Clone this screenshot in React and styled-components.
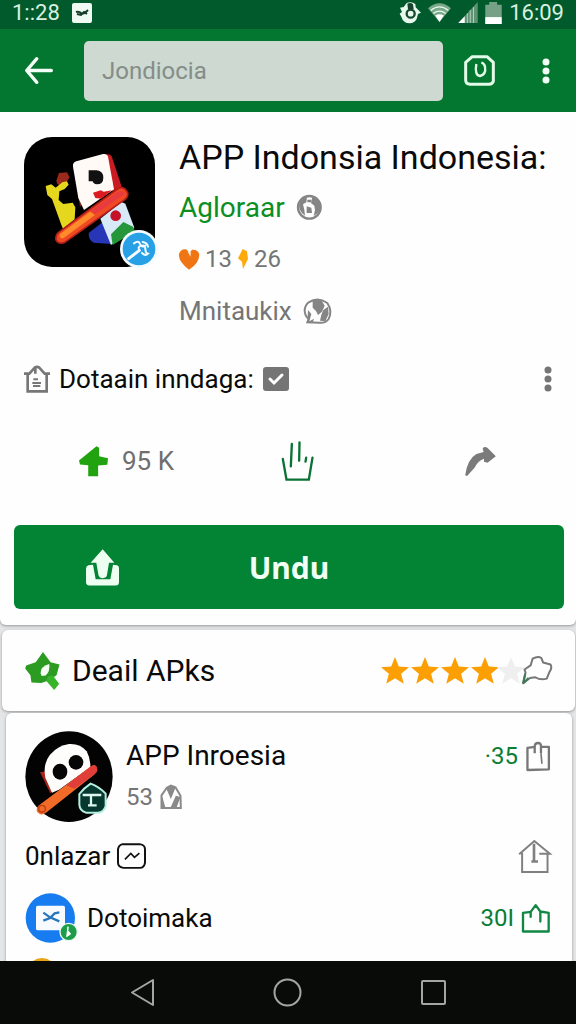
import React, { Component } from 'react';
import styled, { createGlobalStyle } from 'styled-components';

const GlobalStyles = createGlobalStyle`
  * {
    box-sizing: border-box;
  }

  body {
    margin: 0;
    padding: 0;
    font-family: Roboto, 'Noto Sans', sans-serif;
    color: #0a0a0a;
    background: #e4e5e7;
  }
`;

const Screen = styled.div`
  display: flex;
  flex-direction: column;
  height: 100vh;
  overflow: hidden;
`;

const StatusBar = styled.div`
  flex: none;
  display: flex;
  align-items: center;
  justify-content: space-between;
  height: 29px;
  padding: 0 12px 4px;
  background: #005a2b;
  color: #d9efe0;
  font-size: 22px;
  line-height: 24px;
`;

const StatusGroup = styled.div`
  display: flex;
  align-items: center;
  gap: ${props => props.$gap}px;
`;

const Toolbar = styled.header`
  flex: none;
  display: flex;
  align-items: center;
  height: 83px;
  padding: 0 26px 0 25px;
  background: #03762f;
`;

const SearchInput = styled.input`
  flex: 1;
  min-width: 0;
  height: 60px;
  margin: 0 21px 0 31px;
  padding: 0 18px;
  border: 0;
  border-radius: 5px;
  background: #cdd9d1;
  color: #858d88;
  font-family: inherit;
  font-size: 24px;
`;

const IconButton = styled.button`
  flex: none;
  display: flex;
  margin: 0;
  margin-left: ${props => props.$push || 0}px;
  padding: 0;
  border: 0;
  background: none;
`;

const Icon = styled.svg`
  flex: none;
  display: block;
  width: ${props => props.$w}px;
  height: ${props => props.$h}px;
  overflow: visible;
`;

const Content = styled.main`
  flex: 1;
  min-height: 0;
  overflow: hidden;
`;

const Card = styled.section`
  background: #fdfefd;
  border-radius: 6px;
  box-shadow: 0 1px 3px rgba(0, 0, 0, 0.35);
`;

const AppCard = styled(Card)`
  padding: 25px 12px 16px 14px;
  border-radius: 0 0 6px 6px;
`;

const AppHead = styled.div`
  display: flex;
  gap: 24px;
  padding-left: 10px;
`;

const AppTitle = styled.h1`
  margin: 0 0 4px;
  font-size: 34px;
  font-weight: 400;
  line-height: 40px;
  white-space: nowrap;
`;

const MetaRow = styled.div`
  display: flex;
  align-items: center;
  gap: ${props => props.$gap || 8}px;
  height: 52px;
  color: #757575;
  font-size: ${props => props.$size}px;
`;

const DevLink = styled.a`
  color: #0b8f22;
  text-decoration: none;
`;

const DomainRow = styled.div`
  display: flex;
  align-items: center;
  gap: 9px;
  height: 44px;
  margin-top: 20px;
  padding: 0 12px 0 10px;
  font-size: 26px;
`;

const CheckWrap = styled.span`
  position: relative;
  display: flex;
  margin-right: auto;
`;

const Check = styled.input`
  appearance: none;
  width: 26px;
  height: 24px;
  margin: 0;
  border-radius: 3px;
  background: #757575;
`;

const CheckMark = styled.svg`
  position: absolute;
  top: 0;
  left: 0;
  width: 26px;
  height: 24px;
  pointer-events: none;
`;

const Actions = styled.div`
  display: grid;
  grid-template-columns: 1.1fr 1fr auto;
  align-items: center;
  justify-items: start;
  height: 80px;
  margin-top: 20px;
  padding: 0 68px 0 65px;
`;

const VoteButton = styled(IconButton)`
  align-items: center;
  gap: 14px;
  color: #6f6f6f;
  font-family: inherit;
  font-size: 26px;
`;

const InstallButton = styled.button`
  display: grid;
  grid-template-columns: 1fr auto 1fr;
  align-items: center;
  width: 100%;
  height: 84px;
  margin-top: 24px;
  padding: 0 72px;
  border: 0;
  border-radius: 6px;
  background: #038435;
  color: #f1fff5;
  font-family: 'Noto Sans', sans-serif;
  font-size: 30px;
  font-weight: 700;
`;

const DetailCard = styled(Card)`
  display: flex;
  align-items: center;
  justify-content: space-between;
  height: 81px;
  margin: 5px 1px 0 2px;
  padding: 0 23px;
`;

const DetailTitle = styled.h2`
  display: flex;
  align-items: center;
  gap: 12px;
  margin: 0;
  font-size: 30px;
  font-weight: 400;
`;

const Rating = styled.div`
  display: flex;
  align-items: center;
`;

const ListCard = styled(Card)`
  margin: 2px 4px 0 6px;
  padding: 18px 22px 18px 19px;
`;

const ListRow = styled.div`
  display: flex;
  align-items: ${props => props.$align || 'center'};
  height: ${props => props.$height}px;
  margin-bottom: 15px;
`;

const RowText = styled.div`
  flex: 1;
  display: flex;
  align-items: center;
  gap: 7px;
  padding-left: ${props => props.$indent || 0}px;
  font-size: 26px;
`;

const AppEntry = styled.div`
  flex: 1;
  padding-left: 13px;
`;

const EntryName = styled.h3`
  margin: 4px 0 0;
  font-size: 28px;
  font-weight: 400;
  line-height: 42px;
`;

const EntrySub = styled.div`
  display: flex;
  align-items: center;
  gap: 7px;
  color: #757575;
  font-size: 24px;
  line-height: 40px;
`;

const Count = styled.div`
  display: flex;
  align-items: center;
  gap: 8px;
  height: 50px;
  color: #0b7d34;
  font-size: 24px;
`;

const NavBar = styled.nav`
  flex: none;
  display: grid;
  grid-template-columns: repeat(3, 1fr);
  align-items: center;
  justify-items: center;
  height: 63px;
  padding: 0 12%;
  background: #090b09;
`;

const Dots = ({ color }) => (
  <Icon $w={8} $h={26} viewBox="0 0 8 26" fill={color}>
    <circle cx="4" cy="4" r="3.500" />
    <circle cx="4" cy="13" r="3.500" />
    <circle cx="4" cy="22" r="3.500" />
  </Icon>
);

const Star = ({ faded }) => (
  <Icon $w={faded ? 22 : 30} $h={30} viewBox={faded ? '4 0 22 30' : '0 0 30 30'} fill={faded ? '#efefef' : '#fb9f04'}>
    <path d="M15 1l3.800 9.500 10.200.7-7.900 6.500 2.700 10L15 22.300 6.200 27.700l2.700-10L1 11.200l10.200-.7z" />
  </Icon>
);

const AppLogo = () => (
  <Icon $w={131} $h={130} viewBox="42 37 393 390">
    <rect x="42" y="37" width="393" height="390" rx="84" fill="#000" />
    <path d="M139 168l8-23 24-2 8 15-9 14 4 6-18 8-14-8z" fill="#9c2a1a" />
    <path d="M107 184l17-5 13 10 20-16 14-3 5 10-12 13-16 7-2 26 14 12 28-4 8 14-2 36-35 28-4-9-29-80-14-12z" fill="#e5d71d" />
    <path d="M203 205l11-9 8 40-12 10z" fill="#6d2418" />
    <path d="M285 89q18-3 21 9l29 88-28 14z" fill="#c91c22" />
    <path d="M189 126q-2-12 10-16l80-22q12-2 15 8l18 98-90 62-17-36z" fill="#fffaf6" />
    <path d="M236 137h24q20 3 20 22 0 20-20 20-10-1-12-9h-12z" fill="#111" />
    <path d="M249 204l23-7 9 4 24-4-31 25-18-2z" fill="#dc1b20" />
    <path d="M236 325l46-36 22 69-53-4q-16-8-15-29z" fill="#2636b6" />
    <path d="M271 282l63-50 12 5 27 72-70 52z" fill="#d8e9f7" />
    <path d="M303 329l37-37 29 14 6 14-67 41z" fill="#25973a" />
    <circle cx="317" cy="273" r="16" fill="#c3122a" />
    <path d="M145 324L318 196q23-17 35 9 2 11-9 20L167 351q-19 11-29-5-2-13 7-22z" fill="#ee4a23" stroke="#b81f1b" strokeWidth="5" />
    <path d="M150 328l90-67 15 10-94 69q-15 4-11-12z" fill="#ff8b2b" />
    <path d="M242 258l83-57q15-7 19 7l-88 60z" fill="#e93a3f" />
    <circle cx="387" cy="373" r="57" fill="#f3fbff" />
    <circle cx="387" cy="373" r="49" fill="#27a0e6" />
    <path d="M356 402l32-25" fill="none" stroke="#f4fbff" strokeWidth="9" strokeLinecap="round" />
    <path d="M372 356q14-10 18 2t16 5M388 377q-6-12 6-14t12 10 8 14q-8 8-18-2M398 352q14 2 16 14" fill="none" stroke="#f4fbff" strokeWidth="6" strokeLinecap="round" />
  </Icon>
);

const Avatar = () => (
  <Icon $w={88} $h={91} viewBox="74 63 262 273">
    <ellipse cx="205" cy="200" rx="131" ry="136" fill="#030303" />
    <path d="M118 187l17-3 26 55-12 11z" fill="#a7231d" />
    <path d="M134 203q-8-41 14-69 24-28 57-32 34-2 53 22 12 22 11 48l-94 67-21 9z" fill="#fffdfb" />
    <ellipse cx="178" cy="185" rx="22" ry="24" fill="#060606" />
    <circle cx="226" cy="157" r="22" fill="#060606" />
    <path d="M113 287l158-118q16-9 19 10 0 8-10 15L136 308q-17 13-28-5-2-9 5-16z" fill="#f26a28" />
    <path d="M196 226l75-57q16-9 19 10 0 8-10 15l-59 42z" fill="#e23e39" />
    <circle cx="124" cy="296" r="10" fill="none" stroke="#b93e12" strokeWidth="4" />
    <path d="M270 221q25 9 45 30v37q-6 20-24 20h-35q-19-6-20-24v-32q14-18 34-31z" fill="#06382f" stroke="#b4eee0" strokeWidth="6" />
    <path d="M246 255h56M271 256v30M262 286h26" fill="none" stroke="#dcf6ef" strokeWidth="7" />
  </Icon>
);

class App extends Component {
  state = {
    query: 'Jondiocia',
    verified: true
  };

  render() {
    const { query, verified } = this.state;
    return (
      <Screen>
        <GlobalStyles />
        <StatusBar>
          <StatusGroup $gap={12}>
            <span>1::28</span>
            <Icon $w={20} $h={20} viewBox="0 0 20 20">
              <rect width="20" height="20" rx="2" fill="#eefaf2" />
              <path d="M4 9q3-1 5 1t7-3M5 11l4 1 3-3 3 2" fill="none" stroke="#153d27" strokeWidth="2" />
            </Icon>
          </StatusGroup>
          <StatusGroup $gap={7}>
            <Icon $w={21} $h={22} viewBox="345 3 63 66">
              <path d="M365 6q14-6 26 3l1 10 16 16-9 4-4 15q-8 13-20 13-21-1-26-20l-5-9 7-5-6-13 11-2z" fill="#e7f8ec" />
              <path d="M367 8q10-5 17 2l2 13-8 6-9-5z" fill="#16442c" />
              <circle cx="377" cy="38" r="12" fill="none" stroke="#17472f" strokeWidth="7" />
            </Icon>
            <Icon $w={23} $h={19} viewBox="432 5 70 58">
              <path d="M432 21q35-31 70 0l-35 42z" fill="#79a98a" />
              <path d="M440 28q27-22 54 0M448 37q19-14 38 0" fill="none" stroke="#e7f8ec" strokeWidth="4" />
              <path d="M454 43q13-8 26 0l-13 20z" fill="#fff" />
            </Icon>
            <Icon $w={20} $h={21} viewBox="508 3 60 65">
              <path d="M568 3v65h-60z" fill="#5f9374" />
              <path d="M528 47v21h-20z" fill="#fff" />
              <path d="M536 38v30M545 28v40M555 19v49" stroke="#b5d3c0" strokeWidth="3" />
            </Icon>
            <Icon $w={17} $h={22} viewBox="594 0 50 67">
              <path d="M606 0h24v8h14v59h-50V8h12z" fill="#75a287" />
              <path d="M594 46h50v21h-50z" fill="#fff" />
            </Icon>
            <span>16:09</span>
          </StatusGroup>
        </StatusBar>

        <Toolbar>
          <IconButton aria-label="Back">
            <Icon $w={28} $h={27} viewBox="77 170 83 80" fill="none" stroke="#f4fff7" strokeWidth="10" strokeLinecap="round" strokeLinejoin="round">
              <path d="M155 210H83M112 175l-30 35 30 35" />
            </Icon>
          </IconButton>
          <SearchInput
            aria-label="Search"
            type="text"
            value={query}
            onChange={e => this.setState({ query: e.target.value })}
          />
          <IconButton aria-label="Account">
            <Icon $w={31} $h={31} viewBox="527 163 93 93" fill="none" stroke="#e4fbea" strokeWidth="9">
              <path d="M552 168h44l19 17v57q-3 9-13 9h-57q-13-1-13-13v-53z" strokeLinejoin="round" />
              <path d="M564 190q-6 34 11 36 19-4 15-28-2-10-11-12" strokeWidth="7" />
            </Icon>
          </IconButton>
          <IconButton aria-label="More" $push={47}>
            <Dots color="#f0fff4" />
          </IconButton>
        </Toolbar>

        <Content>
          <AppCard>
            <AppHead>
              <AppLogo />
              <div>
                <AppTitle>APP Indonsia Indonesia:</AppTitle>
                <MetaRow $size={28} $gap={12}>
                  <DevLink href="#developer">Agloraar</DevLink>
                  <Icon $w={25} $h={25} viewBox="398 192 75 75">
                    <circle cx="435" cy="229" r="34" fill="none" stroke="#858585" strokeWidth="7" />
                    <path d="M404 222q5-18 24-24l-2 16-10 6 4 16 2 18q-18-12-18-32zM444 198q20 6 24 28-2 22-20 28l4-16-2-14-10-8z" fill="#858585" />
                    <path d="M429 206h12v8h-12zM427 226l14 4 2 16h-16z" fill="#858585" />
                  </Icon>
                </MetaRow>
                <MetaRow $size={24} $gap={6}>
                  <Icon $w={20} $h={21} viewBox="40 352 60 63">
                    <path d="M70 414Q37 389 40 367q5-16 21-14l11 10 7-9q19-1 22 15-1 26-31 45z" fill="#f07514" />
                    <path d="M66 360l8 15 2-13z" fill="#fde7d2" />
                  </Icon>
                  <span>13</span>
                  <Icon $w={10} $h={20} viewBox="225 353 30 60">
                    <path d="M239 353l13 7 3 23-15 30-3-22-12-10z" fill="#fdaa0a" />
                  </Icon>
                  <span>26</span>
                </MetaRow>
                <MetaRow $size={26} $gap={12}>
                  <span>Mnitaukix</span>
                  <Icon $w={27} $h={25} viewBox="420 507 81 75">
                    <path d="M434 517q28-18 56 2 16 24 4 48-10 14-30 11l-34-1 4-10q-12-10-12-26 1-15 12-24z" fill="none" stroke="#858585" strokeWidth="6" />
                    <path d="M446 513q16-6 28 0l8 14-8 18-12 10-6-12-10-10zM478 540l14-10 2 22-10 22-16-2 4-18zM432 540l10 12-6 22 14-8-4 12h-16z" fill="#858585" />
                  </Icon>
                </MetaRow>
              </div>
            </AppHead>

            <DomainRow>
              <Icon $w={26} $h={28} viewBox="72 44 78 84" fill="none" stroke="#777" strokeWidth="8">
                <path d="M72 70h16l16-18q7-5 14 0l16 18h16M83 69v54h57V69M106 52v18" />
                <path d="M100 87h14M97 98h26M99 107h22" strokeWidth="6" />
              </Icon>
              <label htmlFor="verified">Dotaain inndaga:</label>
              <CheckWrap>
                <Check
                  id="verified"
                  type="checkbox"
                  checked={verified}
                  onChange={e => this.setState({ verified: e.target.checked })}
                />
                <CheckMark viewBox="0 0 26 24">
                  <path d="M7 12l4 4 8-8" fill="none" stroke="#fff" strokeWidth="3" strokeLinecap="round" />
                </CheckMark>
              </CheckWrap>
              <IconButton aria-label="Options">
                <Dots color="#757575" />
              </IconButton>
            </DomainRow>

            <Actions>
              <VoteButton>
                <Icon $w={29} $h={31} viewBox="237 290 88 92">
                  <path d="M290 290l8 4v26l27 6-2 20-28 2v33h-30v-34l-25-2-3-12z" fill="#20a30f" />
                </Icon>
                95 K
              </VoteButton>
              <IconButton aria-label="Like">
                <Icon $w={33} $h={40} viewBox="20 262 98 120" fill="none" stroke="#0b7135" strokeWidth="7" strokeLinecap="round">
                  <path d="M25 316l11 62h67l11-66M52 271l-3 67M75 266l-1 55M95 312l-2 12" />
                </Icon>
              </IconButton>
              <IconButton aria-label="Share">
                <Icon $w={31} $h={29} viewBox="567 289 93 88">
                  <path d="M623 290q7-2 12 2l25 25-25 20-11-3v-9q-17 5-28 26l-23 26-6-2q7-50 34-65l22-6-3-10z" fill="#7b7b7b" />
                </Icon>
              </IconButton>
            </Actions>

            <InstallButton>
              <Icon $w={33} $h={37} viewBox="255 95 99 110">
                <path d="M262 143l14-1 8 43h44l8-43 12 1q6 2 6 9v43q-1 9-9 9h-80q-10-1-10-10v-40q0-9 7-11z" fill="#ecfff1" />
                <path d="M305 95l35 41h-16l-6 36q-1 10-13 10-11 0-13-11l-6-35h-17z" fill="#ecfff1" />
              </Icon>
              <span>Undu</span>
            </InstallButton>
          </AppCard>

          <DetailCard>
            <DetailTitle>
              <Icon $w={35} $h={38} viewBox="77 408 105 115">
                <path d="M131 408l23 31 27 7-9 32-24 16-22 8-30-2-3-22-16-20 3-9 29-10z" fill="#2c9b22" />
                <path d="M124 472q-2-20 26-28 3 22-11 35l-12 2z" fill="#f7fff5" />
                <path d="M146 482l14-4 20 26-15 19-24-27z" fill="#38b32a" />
              </Icon>
              Deail APks
            </DetailTitle>
            <Rating role="img" aria-label="4 of 5">
              <Star />
              <Star />
              <Star />
              <Star />
              <Star faded />
              <Icon $w={30} $h={29} viewBox="485 138 88 86" fill="none" stroke="#777" strokeWidth="6" strokeLinejoin="round">
                <path d="M488 219l7-32-3-9 18-12 6-20q16-9 26-2l5 13 22 6q6 10-3 22l-8 20q-18 6-34-4l-16 2z" />
                <path d="M488 219l6-28M488 219l16-16" stroke="#3d7a58" />
              </Icon>
            </Rating>
          </DetailCard>

          <ListCard>
            <ListRow $height={88} $align="flex-start">
              <Avatar />
              <AppEntry>
                <EntryName>APP Inroesia</EntryName>
                <EntrySub>
                  53
                  <Icon $w={22} $h={24} viewBox="479 222 65 72">
                    <path d="M483 291v-38l16-23 12-6 14 5 15 25 1 37z" fill="#fff" stroke="#8a8a8a" strokeWidth="6" />
                    <path d="M497 232l14-8 14 6-14 34zM526 254l14 4-12 32h-18zM485 256l10 34h-12z" fill="#8a8a8a" />
                  </Icon>
                </EntrySub>
              </AppEntry>
              <Count>
                ·35
                <Icon $w={24} $h={29} viewBox="498 390 72 88" fill="none" stroke="#777" strokeWidth="7" strokeLinejoin="round">
                  <path d="M524 424v-19l-22 3v67l65-2v-68l-24-1v20M524 405q0-12 10-12t9 12" />
                  <path d="M543 424l3 32" strokeWidth="5" />
                </Icon>
              </Count>
            </ListRow>

            <ListRow $height={44}>
              <RowText>
                0nlazar
                <Icon $w={29} $h={26} viewBox="349 399 88 78" fill="none" stroke="#111" strokeWidth="6">
                  <path d="M366 402h52q16 2 16 16v40q-2 16-16 16h-50q-16-2-16-16v-40q2-14 14-16z" />
                  <path d="M373 448l18-18 11 12 15-13" strokeWidth="5" />
                </Icon>
              </RowText>
              <Icon $w={31} $h={33} viewBox="355 51 93 100" fill="none" stroke="#808080" strokeWidth="6">
                <path d="M355 94l46-40 47 39h-32M364 90v58h77V92" />
                <path d="M400 62v56M392 116h20" strokeWidth="8" />
              </Icon>
            </ListRow>

            <ListRow $height={50}>
              <Icon $w={52} $h={50} viewBox="79 39 156 150">
                <circle cx="155" cy="114" r="74" fill="#167cef" />
                <rect x="112" y="77" width="87" height="74" rx="5" fill="#f7fbff" />
                <path d="M134 98l20 14 28 12M134 122l20-8 14-14 14-3" fill="none" stroke="#2876b9" strokeWidth="7" />
                <circle cx="210" cy="156" r="26" fill="#1b9d4a" stroke="#eefaf1" strokeWidth="4" />
                <path d="M208 140v12l8 10-12 8 2-16z" fill="#fff" stroke="#fff" strokeWidth="3" />
              </Icon>
              <RowText $indent={10}>Dotoimaka</RowText>
              <Count>
                30I
                <Icon $w={28} $h={29} viewBox="363 246 84 86" fill="none" stroke="#118744" strokeWidth="7" strokeLinejoin="round" strokeLinecap="round">
                  <path d="M389 284v-15l-23 3v56h77v-56l-25-4v30M389 269l15-20 14 19" />
                </Icon>
              </Count>
            </ListRow>

            <ListRow $height={30}>
              <Icon $w={34} $h={30} viewBox="0 0 34 30">
                <circle cx="17" cy="15" r="15" fill="#e8a416" />
              </Icon>
            </ListRow>
          </ListCard>
        </Content>

        <NavBar>
          <IconButton aria-label="Back">
            <Icon $w={25} $h={29} viewBox="0 0 25 29" fill="none" stroke="#a5a5a5" strokeWidth="2" strokeLinejoin="round">
              <path d="M23 2v25L2 14.500z" />
            </Icon>
          </IconButton>
          <IconButton aria-label="Home">
            <Icon $w={29} $h={29} viewBox="0 0 29 29" fill="none" stroke="#a5a5a5" strokeWidth="2">
              <circle cx="14.500" cy="14.500" r="13" />
            </Icon>
          </IconButton>
          <IconButton aria-label="Recent">
            <Icon $w={25} $h={25} viewBox="0 0 25 25" fill="none" stroke="#a5a5a5" strokeWidth="2">
              <rect x="1" y="1" width="23" height="23" rx="1" />
            </Icon>
          </IconButton>
        </NavBar>
      </Screen>
    );
  }
}

export default App;
